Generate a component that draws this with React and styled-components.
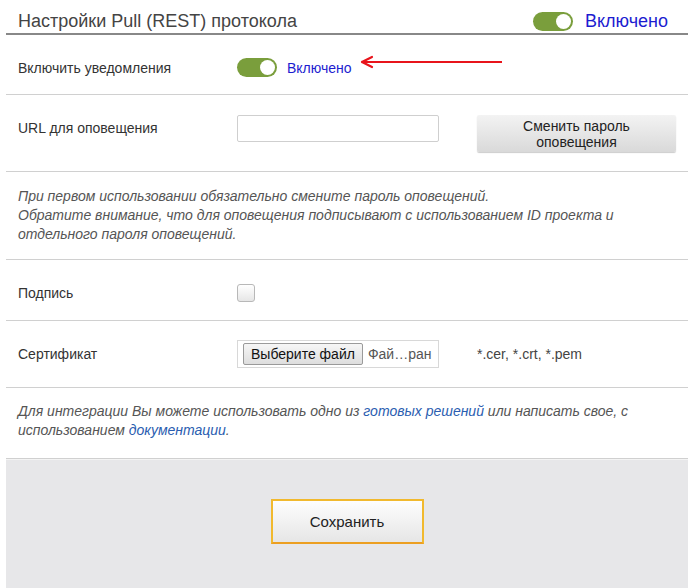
import styled, { createGlobalStyle } from "styled-components"

const GlobalStyle = createGlobalStyle`
  html, body {
    margin: 0;
    padding: 0;
    background: #fff;
  }
  body {
    font-family: "Liberation Sans Narrow", "Liberation Sans", Arial, sans-serif;
  }
`

const Page = styled.div`
  width: 682px;
  margin: 0 6px;
  height: 588px;
  display: flex;
  flex-direction: column;
`

const Header = styled.div`
  height: 33px;
  border-bottom: 2px solid #888;
  display: flex;
  align-items: center;
  justify-content: space-between;
  padding: 0 20px 0 12px;
  box-sizing: content-box;
`

const Title = styled.h1`
  margin: 0;
  padding-top: 9px;
  font-size: 18px;
  font-weight: normal;
  color: #444;
`

const Status = styled.span`
  color: #1c1cd0;
  font-size: ${(p) => (p.big ? "18px" : "14px")};
  margin-left: ${(p) => (p.big ? "12px" : "10px")};
`

const Switch = styled.span`
  display: inline-block;
  position: relative;
  width: 40px;
  height: 19px;
  border-radius: 10px;
  background: #7a9e3c;
  &::after {
    content: "";
    position: absolute;
    right: 2px;
    top: 2px;
    width: 15px;
    height: 15px;
    border-radius: 50%;
    background: #fff;
  }
`

const SwitchGroup = styled.div`
  display: flex;
  align-items: center;
  padding-top: ${(p) => p.top || 0}px;
  position: relative;
`

const Row = styled.div`
  display: flex;
  align-items: ${(p) => p.align || "center"};
  height: ${(p) => p.h}px;
  border-bottom: 1px solid #d0d0d0;
  padding-left: 12px;
  padding-top: ${(p) => p.pt || 0}px;
  box-sizing: border-box;
`

const Label = styled.div`
  width: 219px;
  flex-shrink: 0;
  font-size: 14px;
  line-height: ${(p) => p.lh || "normal"};
  color: #333;
`

const TextInput = styled.input`
  width: 202px;
  height: 27px;
  box-sizing: border-box;
  border: 1px solid #cfcfcf;
  border-radius: 2px;
  margin: 0;
`

const GrayButton = styled.button`
  margin-left: 38px;
  width: 199px;
  height: 37px;
  border: none;
  border-radius: 2px;
  background: linear-gradient(#f3f3f3, #d9d9d9);
  box-shadow: 0 1px 1px rgba(0, 0, 0, 0.2);
  font-family: inherit;
  font-size: 14px;
  line-height: 16px;
  color: #222;
  padding: 0;
`

const Note = styled.div`
  font-size: 14px;
  font-style: italic;
  color: #555;
  line-height: 19px;
  padding: ${(p) => p.pad};
  border-bottom: 1px solid #d0d0d0;
  height: ${(p) => p.h}px;
  box-sizing: border-box;
`

const Link = styled.a`
  color: #2a5db0;
  text-decoration: none;
`

const Checkbox = styled.span`
  display: block;
  width: 16px;
  height: 16px;
  border: 1px solid #b8b8b8;
  border-radius: 3px;
  background: linear-gradient(#fff, #e6e6e6);
`

const FileBox = styled.div`
  width: 202px;
  height: 28px;
  box-sizing: border-box;
  border: 1px solid #d8d8d8;
  display: flex;
  align-items: center;
  padding-left: 5px;
  font-size: 14px;
  color: #555;
`

const FileButton = styled.span`
  border: 1px solid #9a9a9a;
  border-radius: 2px;
  background: linear-gradient(#f6f6f6, #dedede);
  color: #111;
  padding: 2px 7px;
  margin-right: 5px;
`

const Hint = styled.span`
  margin-left: 38px;
  font-size: 14px;
  color: #444;
`

const Footer = styled.div`
  flex: 1;
  background: #e7e7e9;
  border-top: 1px solid #f4f4f4;
  display: flex;
  justify-content: center;
  padding-top: 39px;
`

const SaveButton = styled.button`
  width: 153px;
  height: 45px;
  border: 2px solid #f1b92e;
  border-bottom-color: #ec9f22;
  background: linear-gradient(#fdfdfd, #e6e6e6);
  font-family: inherit;
  font-size: 15px;
  color: #222;
  padding: 0;
`

const Arrow = styled.svg`
  position: absolute;
  left: 122px;
  top: -3px;
`

export default function App() {
  return (
    <>
      <GlobalStyle />
      <Page>
        <Header>
          <Title>Настройки Pull (REST) протокола</Title>
          <SwitchGroup top={9}>
            <Switch />
            <Status big>Включено</Status>
          </SwitchGroup>
        </Header>
        <Row h={60} pt={6}>
          <Label>Включить уведомления</Label>
          <SwitchGroup>
            <Switch />
            <Status>Включено</Status>
            <Arrow width="145" height="14" viewBox="0 0 145 14">
              <path d="M5 7 H143" stroke="#e8141b" strokeWidth="2" fill="none" />
              <path d="M3 7 L13 2 M3 7 L13 12" stroke="#e8141b" strokeWidth="2.2" fill="none" strokeLinecap="round" />
            </Arrow>
          </SwitchGroup>
        </Row>
        <Row h={77} pt={20} align="flex-start">
          <Label lh="27px">URL для оповещения</Label>
          <TextInput />
          <GrayButton>
            Сменить пароль
            <br />
            оповещения
          </GrayButton>
        </Row>
        <Note h={88} pad="15px 12px 0">
          При первом использовании обязательно смените пароль оповещений.
          <br />
          Обратите внимание, что для оповещения подписывают с использованием ID проекта и
          <br />
          отдельного пароля оповещений.
        </Note>
        <Row h={61} pt={5}>
          <Label>Подпись</Label>
          <Checkbox />
        </Row>
        <Row h={67}>
          <Label>Сертификат</Label>
          <FileBox>
            <FileButton>Выберите файл</FileButton>
            Фай…ран
          </FileBox>
          <Hint>*.cer, *.crt, *.pem</Hint>
        </Row>
        <Note h={71} pad="14px 12px 0">
          Для интеграции Вы можете использовать одно из <Link>готовых решений</Link> или написать свое, с
          <br />
          использованием <Link>документации</Link>.
        </Note>
        <Footer>
          <SaveButton>Сохранить</SaveButton>
        </Footer>
      </Page>
    </>
  )
}
